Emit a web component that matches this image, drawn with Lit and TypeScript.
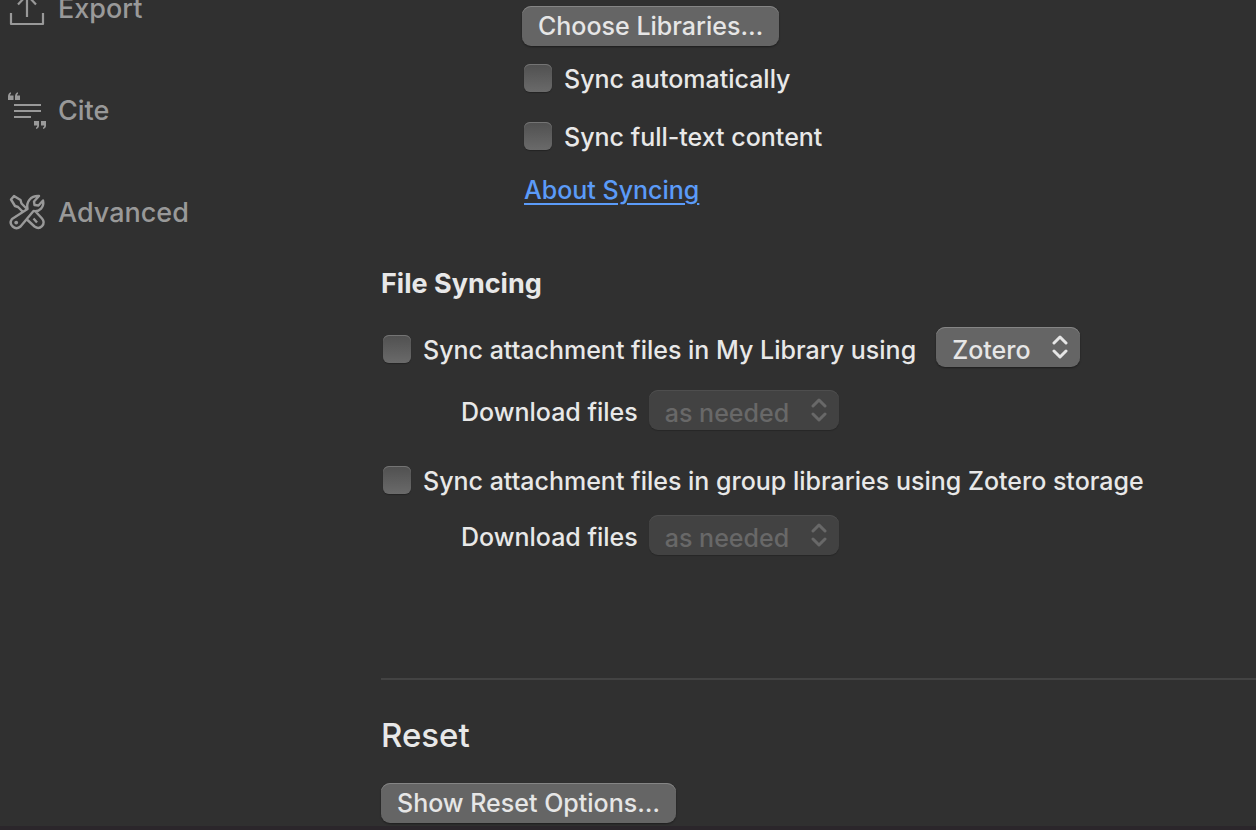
import { LitElement, html, svg, css } from "lit";
import { customElement, property } from "lit/decorators.js";

const icons: Record<string, unknown> = {
  export: svg`<path d="M2 23v11h32V23M18 27V5M9 14.500l9-9.500 9 9.500" stroke-width="2.200"/>`,
  cite: svg`
    <path d="M5 13h27M5 19h27M5 25h17" stroke-width="2.200"/>
    <path class="solid" d="M-1 4.500C-1 2 0 .8 2 .2v1.500C1.300 2.100 1 2.800 1 3.500h3.500V8H-1zM6 4.500C6 2 7 .8 9 .2v1.500C8.300 2.100 8 2.800 8 3.500h3V8H6zM25 29h5v4.500c0 2-1 3-3 3.600v-1.500c1-.5 1.200-1.200 1.200-2.100H25zM32 29h5v4.500c0 2-1 3-3 3.600v-1.500c1-.5 1.200-1.200 1.200-2.100H32z"/>`,
  advanced: svg`
    <path stroke-width="2.400" d="M13.500 17.500 9 13 6 12 2 5.500 5 2l6.500 4 1 3.500 5 5M18.500 15C17 8 21.500 1.500 30 2l-5 5.500.5 3.500 4 .5L34 6.500c1.500 6.500-3.500 11.500-9.500 10.500L11.500 32.500c-5.500 4.500-12.500-2-8.500-7.500zM26.500 17.500l6.500 7c4.500 5.500-2 12-7.500 8L18.500 26M24.500 24.500l3.500 4"/>
    <circle class="solid" cx="7.200" cy="28.600" r="1.900"/>`,
};

@customElement("nav-item")
class NavItem extends LitElement {
  @property() icon = "";
  @property() label = "";
  static styles = css`
    :host { display: block; }
    .link { display: flex; align-items: center; gap: 13px; height: 36px; color: #999; text-decoration: none; }
    .icon { flex: none; width: 36px; height: 36px; overflow: visible; fill: none; stroke: currentColor; stroke-linejoin: round; }
    .solid { fill: currentColor; stroke: none; }
    .label { padding-top: 2px; }
  `;
  render() {
    return html`<a class="link" href="#${this.icon}">
      <svg class="icon" viewBox="0 0 36 36" aria-hidden="true">${icons[this.icon]}</svg>
      <span class="label">${this.label}</span></a>`;
  }
}

@customElement("check-option")
class CheckOption extends LitElement {
  @property() label = "";
  static styles = css`
    :host { display: block; }
    .option { display: flex; align-items: center; gap: 12px; white-space: nowrap; }
    .box {
      appearance: none; flex: none; width: 28px; height: 28px; margin: 0; border-radius: 6px;
      background: linear-gradient(#505050, #6a6a6a);
      box-shadow: inset 0 1px #747474, 0 1px 1px #0004;
    }
    .label { padding-top: 2px; }
  `;
  render() {
    return html`<label class="option"><input class="box" type="checkbox" /><span class="label">${this.label}</span></label>`;
  }
}

@customElement("pop-up")
class PopUp extends LitElement {
  @property() value = "";
  @property() label = "";
  @property({ type: Boolean }) disabled = false;
  static styles = css`
    :host { display: block; }
    .field { display: flex; align-items: center; gap: 11px; white-space: nowrap; }
    .label { padding-top: 4px; }
    .control { display: grid; align-items: center; color: #e6e6e6; }
    .select, .arrows { grid-area: 1 / 1; }
    .select {
      appearance: none; height: 40px; margin: 0; padding: 5px 49px 0 16px; border: 0; border-radius: 9px;
      font: inherit; color: inherit; opacity: 1; background: #656565;
      box-shadow: inset 0 1px #858585, 0 1px 2px #0006;
    }
    .arrows { justify-self: end; width: 16px; height: 24px; margin-right: 12px; pointer-events: none; fill: none; stroke: currentColor; stroke-width: 3; stroke-linecap: round; stroke-linejoin: round; }
    .off { color: #686868; }
    .off .select { background: #424242; box-shadow: inset 0 1px #4e4e4e, 0 1px 1px #0003; }
  `;
  render() {
    return html`<label class="field">${this.label ? html`<span class="label">${this.label}</span>` : ""}
      <span class="control ${this.disabled ? "off" : ""}">
        <select class="select" aria-label=${this.label || "Storage service"} ?disabled=${this.disabled}><option>${this.value}</option></select>
        <svg class="arrows" viewBox="0 0 16 24" aria-hidden="true"><path d="m2 8 6-6 6 6M2 16l6 6 6-6"/></svg>
      </span></label>`;
  }
}

@customElement("app-root")
class AppRoot extends LitElement {
  static styles = css`
    :host {
      display: grid; grid-template-columns: 372px minmax(0, 1fr); box-sizing: border-box;
      min-height: 100vh; padding-left: 9px; border-bottom: 4px solid #2b262b; overflow: hidden;
      background: #303030; color: #e8e8e8; font: 500 25px/32px Inter, "Liberation Sans", sans-serif;
    }
    .nav { display: flex; flex-direction: column; gap: 66px; margin-top: -10px; font-size: 27px; }
    .account { display: flex; flex-direction: column; align-items: flex-start; padding: 6px 0 0 141px; }
    .button {
      height: 40px; padding: 0 16px; border: 0; border-radius: 9px; font: inherit; color: #e6e6e6;
      background: #656565; box-shadow: inset 0 1px #858585, 0 1px 2px #0006;
    }
    .checks { display: flex; flex-direction: column; gap: 30px; padding: 18px 2px 24px; }
    .checks check-option { height: 28px; display: flex; align-items: center; }
    .about { margin-left: 2px; color: #5b9bf8; text-decoration-thickness: 2px; text-underline-offset: 4px; }
    .heading { margin: 62px 0 27px; font-size: 27px; line-height: 32px; font-weight: 700; }
    .row { display: flex; align-items: center; gap: 20px; height: 40px; padding-left: 2px; }
    .row check-option { padding-top: 4px; }
    .download { padding: 23px 0 28px 80px; }
    .group { padding: 17px 0 0 80px; }
    .reset { margin-top: 123px; padding-top: 35px; border-top: 2px solid #434343; }
    .title { margin: 0 0 28px; font-size: 33px; line-height: 40px; font-weight: 500; }
  `;
  render() {
    return html`
      <nav class="nav">
        <nav-item icon="export" label="Export"></nav-item>
        <nav-item icon="cite" label="Cite"></nav-item>
        <nav-item icon="advanced" label="Advanced"></nav-item>
      </nav>
      <main>
        <section class="account">
          <button class="button">Choose Libraries…</button>
          <div class="checks">
            <check-option label="Sync automatically"></check-option>
            <check-option label="Sync full-text content"></check-option>
          </div>
          <a class="about" href="#syncing">About Syncing</a>
        </section>
        <section>
          <h2 class="heading">File Syncing</h2>
          <div class="row">
            <check-option label="Sync attachment files in My Library using"></check-option>
            <pop-up value="Zotero"></pop-up>
          </div>
          <pop-up class="download" label="Download files" value="as needed" disabled></pop-up>
          <div class="row">
            <check-option label="Sync attachment files in group libraries using Zotero storage"></check-option>
          </div>
          <pop-up class="group" label="Download files" value="as needed" disabled></pop-up>
        </section>
        <section class="reset">
          <h1 class="title">Reset</h1>
          <button class="button">Show Reset Options…</button>
        </section>
      </main>`;
  }
}
